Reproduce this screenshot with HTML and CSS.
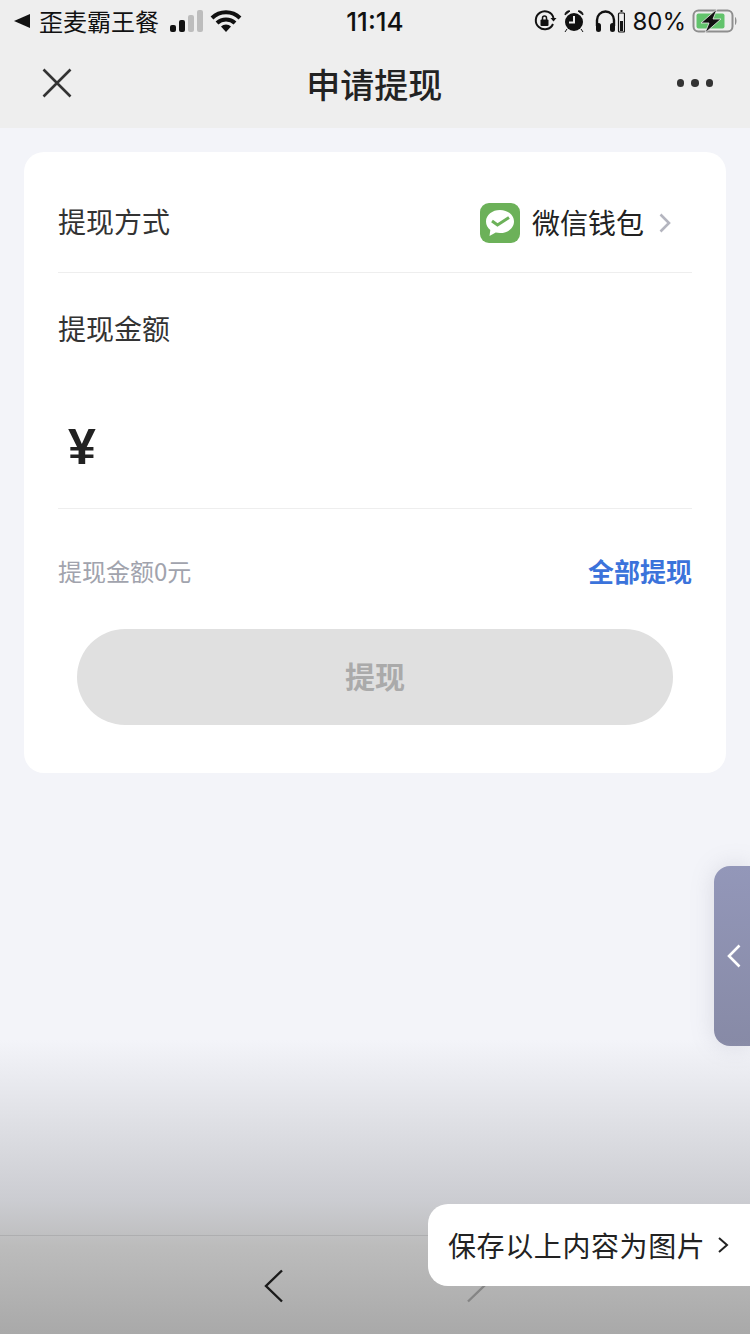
FILE: index.html
```html
<!DOCTYPE html>
<html lang="zh-CN">
<head>
  <meta charset="UTF-8" />
  <title>申请提现</title>
  <link rel="stylesheet" href="styles.css">
</head>
<body>
  <div class="top">
    <div class="status">
      <div class="status-left">
        <svg class="back-tri" width="16" height="14" viewBox="0 0 16 14"><path d="M0 7 16 0v14z" fill="#111"/></svg>
        <span>歪麦霸王餐</span>
        <svg class="signal" width="34" height="22" viewBox="0 0 34 22">
          <rect x="0" y="15" width="6" height="7" rx="2" fill="#111"/>
          <rect x="9" y="10" width="6" height="12" rx="2" fill="#111"/>
          <rect x="18" y="5" width="6" height="17" rx="2" fill="#bdbdbd"/>
          <rect x="27" y="0" width="6" height="22" rx="2" fill="#bdbdbd"/>
        </svg>
        <svg class="wifi" width="32" height="22" viewBox="0 0 32 22">
          <path d="M2 8a20 20 0 0 1 28 0M7 13a13 13 0 0 1 18 0" fill="none" stroke="#111" stroke-width="4"/>
          <path d="M11 16.500a7 7 0 0 1 10 0L16 22z" fill="#111"/>
        </svg>
      </div>
      <div class="clock">11:14</div>
      <div class="status-right">
        <svg width="24" height="24" viewBox="0 0 24 24">
          <path d="M20 15a9 9 0 1 1 .5-6" fill="none" stroke="#111" stroke-width="2"/>
          <path d="M17.500 9h6l-3 3.500z" fill="#111"/>
          <rect x="7.500" y="10.500" width="8" height="6.500" rx="1" fill="#111"/>
          <path d="M9.500 11V9a2 2 0 0 1 4 0v2" fill="none" stroke="#111" stroke-width="1.500"/>
        </svg>
        <svg class="alarm" width="20" height="24" viewBox="0 0 20 24">
          <circle cx="10" cy="13" r="9" fill="#111"/>
          <path d="M1 6a4 4 0 0 1 5-4zM19 6a4 4 0 0 0-5-4zM3 20l-2 3M17 20l2 3" fill="#111" stroke="#111"/>
          <path d="M10 7v6.500H5" fill="none" stroke="#eee" stroke-width="2"/>
        </svg>
        <svg class="phones" width="30" height="24" viewBox="0 0 30 24">
          <path d="M2 17v-6a8.500 8.500 0 0 1 17 0v6" fill="none" stroke="#111" stroke-width="2.400"/>
          <rect x="1" y="14" width="5" height="9" rx="2.500" fill="#111"/>
          <rect x="15" y="14" width="5" height="9" rx="2.500" fill="#111"/>
          <rect x="23.500" y="4" width="6" height="19" rx="1" fill="none" stroke="#111" stroke-width="1.200"/>
          <rect x="25" y="12" width="3" height="10" fill="#111"/>
          <rect x="25.500" y="1" width="2" height="2" fill="#111"/>
        </svg>
        <span class="percent">80%</span>
        <svg class="battery" width="46" height="24" viewBox="0 0 46 24">
          <rect x="1.500" y="1.500" width="39" height="21" rx="5" fill="none" stroke="#8e8e8e" stroke-width="2"/>
          <rect x="4.500" y="4.500" width="28" height="15" rx="2" fill="#62c36c"/>
          <path d="M43 8c2 1 2 7 0 8z" fill="#8e8e8e"/>
          <path d="M25 0 9 14h8L13 24 29 10h-8z" fill="#111" stroke="#eee" stroke-width="0.800"/>
        </svg>
      </div>
    </div>
    <div class="nav">
      <svg class="nav-close" width="30" height="30" viewBox="0 0 30 30"><path d="M1.500 1.500l27 27M28.500 1.500l-27 27" stroke="#333" stroke-width="2.600" fill="none"/></svg>
      <h1>申请提现</h1>
      <div class="more"><i></i><i></i><i></i></div>
    </div>
  </div>

  <div class="content">
    <div class="card">
      <div class="row row-method">
        <span class="label">提现方式</span>
        <div class="method">
          <svg class="wx" width="40" height="40" viewBox="0 0 40 40">
            <rect width="40" height="40" rx="9" fill="#6cb159"/>
            <path d="M20 7c7.700 0 14 4.900 14 11.500S27.700 30 20 30c-1.500 0-3-.2-4.300-.5L9.500 33l.8-6C7.600 25 6 22 6 18.500 6 11.900 12.300 7 20 7z" fill="#fff"/>
            <path d="M12 18l5.500 4L29 14.500" fill="none" stroke="#6cb159" stroke-width="3"/>
          </svg>
          <span class="method-name">微信钱包</span>
          <svg class="chev" width="12" height="20" viewBox="0 0 12 20"><path d="M1.500 1.500 10 10l-8.500 8.500" fill="none" stroke="#b4b5bf" stroke-width="2.600"/></svg>
        </div>
      </div>
      <div class="amount-box">
        <div class="label">提现金额</div>
        <div class="yen">¥</div>
      </div>
      <div class="row-info">
        <span class="hint">提现金额0元</span>
        <span class="all">全部提现</span>
      </div>
      <div class="btn">提现</div>
    </div>
  </div>

  <div class="side-tab">
    <svg width="14" height="24" viewBox="0 0 14 24"><path d="M12.500 1.500 2 12l10.500 10.500" fill="none" stroke="#fff" stroke-width="2.600"/></svg>
  </div>

  <div class="shade">
    <div class="toolbar">
      <svg width="20" height="34" viewBox="0 0 20 34"><path d="M18 1.500 2 17l16 15.500" fill="none" stroke="#1a1a1a" stroke-width="2.400"/></svg>
      <svg width="20" height="34" viewBox="0 0 20 34"><path d="M2 1.500 18 17 2 32.500" fill="none" stroke="#858585" stroke-width="2.400"/></svg>
    </div>
  </div>

  <div class="save-tip">
    <span>保存以上内容为图片</span>
    <svg width="12" height="18" viewBox="0 0 12 18"><path d="M2 2l8 7-8 7" fill="none" stroke="#222" stroke-width="2"/></svg>
  </div>
</body>
</html>
```

FILE: styles.css
```css
* {
  box-sizing: border-box;
}

html, body {
  height: 100%;
}

body {
  position: relative;
  margin: 0;
  height: 1334px;
  overflow: hidden;
  background: #f3f4f9;
  font-family: "Noto Sans CJK SC", "Noto Sans", sans-serif;
  color: #222;
}

.top {
  background: #eeeeee;
  height: 128px;
}

.status {
  display: flex;
  align-items: center;
  justify-content: space-between;
  height: 42px;
  padding: 0 7px 0 14px;
  color: #111;
}

.status-left,
.status-right {
  display: flex;
  align-items: center;
}

.status-left {
  width: 253px;
}

.status-right {
  width: 260px;
}

.status-left span {
  margin-left: 9px;
  font-size: 24px;
  line-height: 30px;
}

.signal {
  margin-left: 11px;
}

.wifi {
  margin-left: 6px;
}

.status-right {
  justify-content: flex-end;
  gap: 7px;
}

.clock {
  font-family: Inter, sans-serif;
  font-size: 26px;
  font-weight: 500;
}

.alarm {
  margin-right: 4px;
}

.percent {
  margin-right: -1px;
  font-family: Inter, sans-serif;
  font-size: 24px;
}

.battery {
  margin-right: 5px;
}

.nav {
  display: flex;
  align-items: center;
  justify-content: space-between;
  height: 86px;
  padding: 0 37px 4px 42px;
}

.nav h1 {
  margin: 0;
  font-size: 34px;
  font-weight: 500;
  color: #222;
}

.more {
  display: flex;
  gap: 7px;
}

.more i {
  width: 7.500px;
  height: 7.500px;
  border-radius: 50%;
  background: #333;
}

.content {
  padding: 24px;
}

.card {
  height: 621px;
  padding: 0 34px;
  border-radius: 20px;
  background: #fff;
}

.label {
  font-size: 28px;
  line-height: 40px;
  color: #333;
}

.row-method {
  display: flex;
  align-items: center;
  justify-content: space-between;
  height: 121px;
  padding-top: 21px;
  border-bottom: 1px solid #eeeeee;
}

.row-method .label {
  margin-bottom: 4px;
}

.method {
  display: flex;
  align-items: center;
  margin-right: 21px;
}

.method-name {
  margin: 0 15px 2px 12px;
  font-size: 28px;
  line-height: 40px;
  color: #222;
}

.amount-box {
  height: 236px;
  padding-top: 35px;
  border-bottom: 1px solid #eeeeee;
}

.yen {
  margin: 69px 0 0 10px;
  font-family: "Liberation Sans", sans-serif;
  font-size: 50px;
  font-weight: 700;
  line-height: 60px;
  color: #222;
}

.row-info {
  display: flex;
  align-items: center;
  justify-content: space-between;
  height: 122px;
}

.hint {
  font-size: 24px;
  color: #a1a3ad;
}

.all {
  font-size: 26px;
  font-weight: 700;
  color: #3b73db;
}

.btn {
  display: flex;
  align-items: center;
  justify-content: center;
  height: 96px;
  margin: -2px 19px 0;
  padding-bottom: 5px;
  border-radius: 48px;
  background: #e0e0e0;
  font-size: 30px;
  font-weight: 700;
  color: #aaaaaa;
}

.side-tab {
  position: absolute;
  top: 866px;
  right: 0;
  display: flex;
  align-items: center;
  width: 36px;
  height: 180px;
  padding-left: 13px;
  border-radius: 16px 0 0 16px;
  background: linear-gradient(to bottom, #9397b9, #878aa6);
  box-shadow: 0 0 24px rgba(120, 122, 140, 0.2);
}

.shade {
  position: absolute;
  left: 0;
  right: 0;
  bottom: 0;
  height: 294px;
  background: linear-gradient(to bottom, rgba(243, 244, 249, 0), #cbccd1 55%, #bcbcbc 70%, #a9a9a9);
}

.toolbar {
  position: absolute;
  left: 0;
  right: 0;
  bottom: 0;
  display: flex;
  justify-content: center;
  gap: 182px;
  height: 99px;
  padding-top: 33px;
  border-top: 1px solid #aeaeb0;
}

.save-tip {
  position: absolute;
  top: 1204px;
  right: 0;
  display: flex;
  align-items: center;
  gap: 12px;
  width: 322px;
  height: 82px;
  padding-left: 20px;
  border-radius: 20px 0 0 20px;
  background: #fff;
  font-size: 28px;
  letter-spacing: 0.6px;
  color: #222;
}
```
